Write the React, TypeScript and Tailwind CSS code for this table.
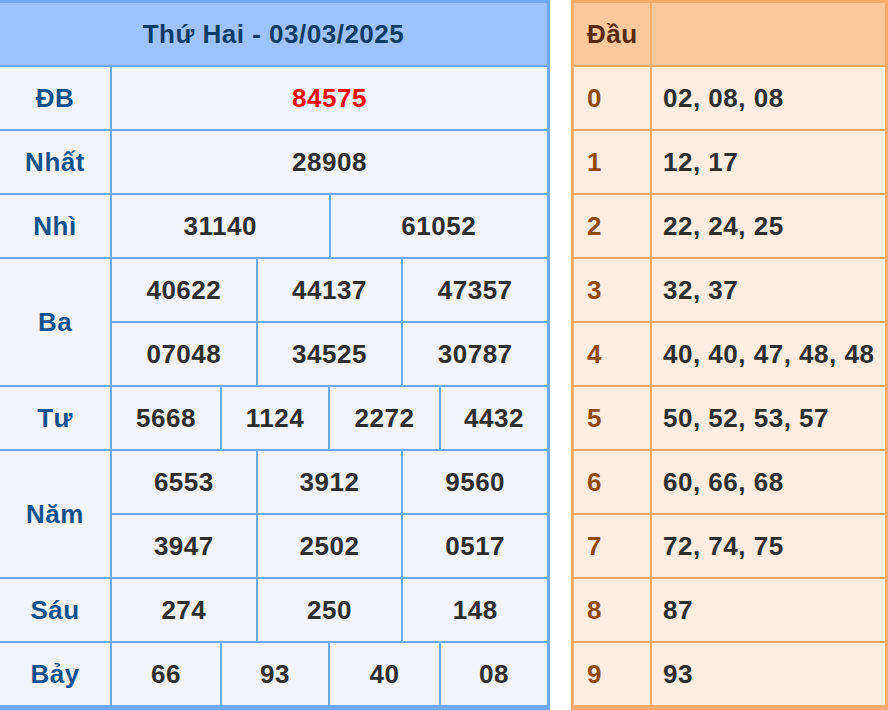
const font = { fontFamily: '"Liberation Sans", Arial, sans-serif' };

type Row = { label: string; lines: string[][]; cols: string; special?: boolean };

const rows: Row[] = [
  { label: "ĐB", lines: [["84575"]], cols: "grid-cols-1", special: true },
  { label: "Nhất", lines: [["28908"]], cols: "grid-cols-1" },
  { label: "Nhì", lines: [["31140", "61052"]], cols: "grid-cols-2" },
  {
    label: "Ba",
    lines: [
      ["40622", "44137", "47357"],
      ["07048", "34525", "30787"],
    ],
    cols: "grid-cols-3",
  },
  {
    label: "Tư",
    lines: [["5668", "1124", "2272", "4432"]],
    cols: "grid-cols-[108px_106px_109px_1fr]",
  },
  {
    label: "Năm",
    lines: [
      ["6553", "3912", "9560"],
      ["3947", "2502", "0517"],
    ],
    cols: "grid-cols-3",
  },
  { label: "Sáu", lines: [["274", "250", "148"]], cols: "grid-cols-3" },
  {
    label: "Bảy",
    lines: [["66", "93", "40", "08"]],
    cols: "grid-cols-[108px_106px_109px_1fr]",
  },
];

const heads: [string, string][] = [
  ["0", "02, 08, 08"],
  ["1", "12, 17"],
  ["2", "22, 24, 25"],
  ["3", "32, 37"],
  ["4", "40, 40, 47, 48, 48"],
  ["5", "50, 52, 53, 57"],
  ["6", "60, 66, 68"],
  ["7", "72, 74, 75"],
  ["8", "87"],
  ["9", "93"],
];

function ResultTable() {
  return (
    <div className="w-[550px] shrink-0 bg-[#6ea8f6] pt-[3px] pr-[3px] pb-[5px] flex flex-col gap-[2px]">
      <div className="h-[62px] bg-[#9cc3fb] flex items-center justify-center text-[26px] font-bold tracking-[0.5px] text-[#0e3c69]">
        Thứ Hai - 03/03/2025
      </div>
      {rows.map((row) => (
        <div key={row.label} className="flex gap-[2px]">
          <div className="w-[110px] shrink-0 bg-[#f3f4f8] flex items-center justify-center text-[26px] font-bold tracking-[0.5px] text-[#11528c]">
            {row.label}
          </div>
          <div className="flex-1 flex flex-col gap-[2px]">
            {row.lines.map((line, i) => (
              <div key={i} className={`grid ${row.cols} gap-[2px]`}>
                {line.map((n, j) => (
                  <div
                    key={j}
                    className={`h-[62px] bg-[#f3f4f8] flex items-center justify-center text-[26px] font-bold tracking-[0.5px] ${
                      row.special ? "text-[#ff0000]" : "text-[#2e2e2e]"
                    }`}
                  >
                    {n}
                  </div>
                ))}
              </div>
            ))}
          </div>
        </div>
      ))}
    </div>
  );
}

function HeadTable() {
  return (
    <div className="w-[317px] shrink-0 bg-[#f9ab6b] pt-[3px] px-[3px] pb-[5px] flex flex-col gap-[2px]">
      <div className="flex gap-[2px]">
        <div className="w-[76px] h-[62px] shrink-0 bg-[#fbc99b] flex items-center pl-[13px] text-[26px] font-bold tracking-[0.5px] text-[#5a280a]">
          Đầu
        </div>
        <div className="flex-1 bg-[#fbc99b]" />
      </div>
      {heads.map(([d, v]) => (
        <div key={d} className="flex gap-[2px]">
          <div className="w-[76px] h-[62px] shrink-0 bg-[#feede0] flex items-center pl-[13px] text-[26px] font-bold tracking-[0.5px] text-[#8f4a08]">
            {d}
          </div>
          <div className="flex-1 bg-[#feede0] flex items-center pl-[11px] text-[26px] font-bold tracking-[0.5px] text-[#2e2e2e] whitespace-nowrap">
            {v}
          </div>
        </div>
      ))}
    </div>
  );
}

export default function App() {
  return (
    <div className="w-[888px] h-[710px] bg-white flex items-start gap-[21px] overflow-hidden" style={font}>
      <ResultTable />
      <HeadTable />
    </div>
  );
}
